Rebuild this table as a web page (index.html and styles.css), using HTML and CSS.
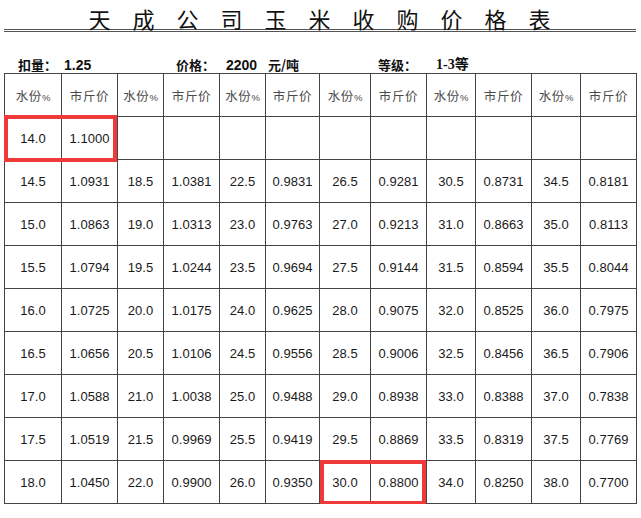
FILE: index.html
```html
<!DOCTYPE html>
<html lang="zh-CN">
<head>
<meta charset="utf-8">
<title>天成公司玉米收购价格表</title>
<link rel="stylesheet" href="styles.css">
</head>
<body>
<div class="page">
  <div class="title">天成公司玉米收购价格表</div>
  <div class="info">
    <span class="lbl l1">扣量：</span><span class="num n1">1.25</span>
    <span class="lbl l2">价格：</span><span class="num n2">2200</span><span class="lbl l3">元/吨</span>
    <span class="lbl l4">等级：</span><span class="grade">1-3等</span>
  </div>
  <div class="sheet">
    <table class="grid">
      <colgroup>
        <col class="c57"><col class="c56"><col class="c46"><col class="c56"><col class="c46"><col class="c54">
        <col class="c51"><col class="c56"><col class="c49"><col class="c56"><col class="c49"><col class="c56">
      </colgroup>
      <thead>
        <tr>
          <th>水份<small>%</small></th><th>市斤价</th>
          <th>水份<small>%</small></th><th>市斤价</th>
          <th>水份<small>%</small></th><th>市斤价</th>
          <th>水份<small>%</small></th><th>市斤价</th>
          <th>水份<small>%</small></th><th>市斤价</th>
          <th>水份<small>%</small></th><th>市斤价</th>
        </tr>
      </thead>
      <tbody>
        <tr><td>14.0</td><td>1.1000</td><td></td><td></td><td></td><td></td><td></td><td></td><td></td><td></td><td></td><td></td></tr>
        <tr><td>14.5</td><td>1.0931</td><td>18.5</td><td>1.0381</td><td>22.5</td><td>0.9831</td><td>26.5</td><td>0.9281</td><td>30.5</td><td>0.8731</td><td>34.5</td><td>0.8181</td></tr>
        <tr><td>15.0</td><td>1.0863</td><td>19.0</td><td>1.0313</td><td>23.0</td><td>0.9763</td><td>27.0</td><td>0.9213</td><td>31.0</td><td>0.8663</td><td>35.0</td><td>0.8113</td></tr>
        <tr><td>15.5</td><td>1.0794</td><td>19.5</td><td>1.0244</td><td>23.5</td><td>0.9694</td><td>27.5</td><td>0.9144</td><td>31.5</td><td>0.8594</td><td>35.5</td><td>0.8044</td></tr>
        <tr><td>16.0</td><td>1.0725</td><td>20.0</td><td>1.0175</td><td>24.0</td><td>0.9625</td><td>28.0</td><td>0.9075</td><td>32.0</td><td>0.8525</td><td>36.0</td><td>0.7975</td></tr>
        <tr><td>16.5</td><td>1.0656</td><td>20.5</td><td>1.0106</td><td>24.5</td><td>0.9556</td><td>28.5</td><td>0.9006</td><td>32.5</td><td>0.8456</td><td>36.5</td><td>0.7906</td></tr>
        <tr><td>17.0</td><td>1.0588</td><td>21.0</td><td>1.0038</td><td>25.0</td><td>0.9488</td><td>29.0</td><td>0.8938</td><td>33.0</td><td>0.8388</td><td>37.0</td><td>0.7838</td></tr>
        <tr><td>17.5</td><td>1.0519</td><td>21.5</td><td>0.9969</td><td>25.5</td><td>0.9419</td><td>29.5</td><td>0.8869</td><td>33.5</td><td>0.8319</td><td>37.5</td><td>0.7769</td></tr>
        <tr><td>18.0</td><td>1.0450</td><td>22.0</td><td>0.9900</td><td>26.0</td><td>0.9350</td><td>30.0</td><td>0.8800</td><td>34.0</td><td>0.8250</td><td>38.0</td><td>0.7700</td></tr>
      </tbody>
    </table>
    <div class="mark mark-a"></div>
    <div class="mark mark-b"></div>
  </div>
</div>
</body>
</html>
```

FILE: styles.css
```css
html, body {
  margin: 0;
  padding: 0;
  background: #ffffff;
}

.page {
  width: 632px;
  margin-left: 4px;
  font-family: "Liberation Sans", Arial, "Noto Sans CJK SC", sans-serif;
  color: #1a1a1a;
}

.title {
  height: 32px;
  box-sizing: border-box;
  padding-top: 7px;
  padding-left: 21px;
  font-family: "Noto Sans CJK SC", sans-serif;
  font-weight: 400;
  font-size: 22px;
  line-height: 22px;
  letter-spacing: 22px;
  text-align: center;
  color: #111;
  border-bottom: 3px double #555;
  white-space: nowrap;
}

.info {
  height: 41px;
  box-sizing: border-box;
  display: flex;
  align-items: flex-end;
  padding-left: 14px;
  padding-bottom: 1px;
  font-size: 13px;
  line-height: 14px;
  font-weight: bold;
  color: #111;
  white-space: nowrap;
}

.info .lbl {
  font-family: "Noto Sans CJK SC", sans-serif;
  font-size: 13px;
}

.info .num {
  font-family: "Liberation Sans", Arial, sans-serif;
  font-size: 14px;
}

.l1 { width: 46px; }
.n1 { width: 112px; }
.l2 { width: 50px; }
.n2 { width: 42px; }
.l3 { width: 110px; }
.l4 { width: 58px; }

.grade {
  font-family: "Liberation Serif", "Noto Sans CJK SC", serif;
  font-size: 14px;
}

.sheet {
  position: relative;
  width: 633px;
}

.grid {
  border-collapse: collapse;
  table-layout: fixed;
  width: 633px;
}

.c57 { width: 57px; }
.c56 { width: 56px; }
.c54 { width: 54px; }
.c51 { width: 51px; }
.c49 { width: 49px; }
.c46 { width: 46px; }

.grid th,
.grid td {
  border: 1px solid #444;
  height: 42px;
  padding: 0;
  text-align: center;
  vertical-align: middle;
  white-space: nowrap;
}

.grid th {
  font-family: "Noto Sans CJK SC", sans-serif;
  font-weight: 400;
  font-size: 12.5px;
  letter-spacing: 0.6px;
  color: #4a4a4a;
}

.grid th small {
  font-family: "Liberation Sans", Arial, sans-serif;
  font-size: 9.5px;
  letter-spacing: 0;
}

.grid td {
  font-size: 13px;
  color: #1a1a1a;
}

.mark {
  position: absolute;
  box-sizing: border-box;
  border: 4px solid #f03a3a;
}

.mark-a {
  left: 0;
  top: 42px;
  width: 113px;
  height: 47px;
}

.mark-b {
  left: 316px;
  top: 387px;
  width: 106px;
  height: 45px;
}
```
